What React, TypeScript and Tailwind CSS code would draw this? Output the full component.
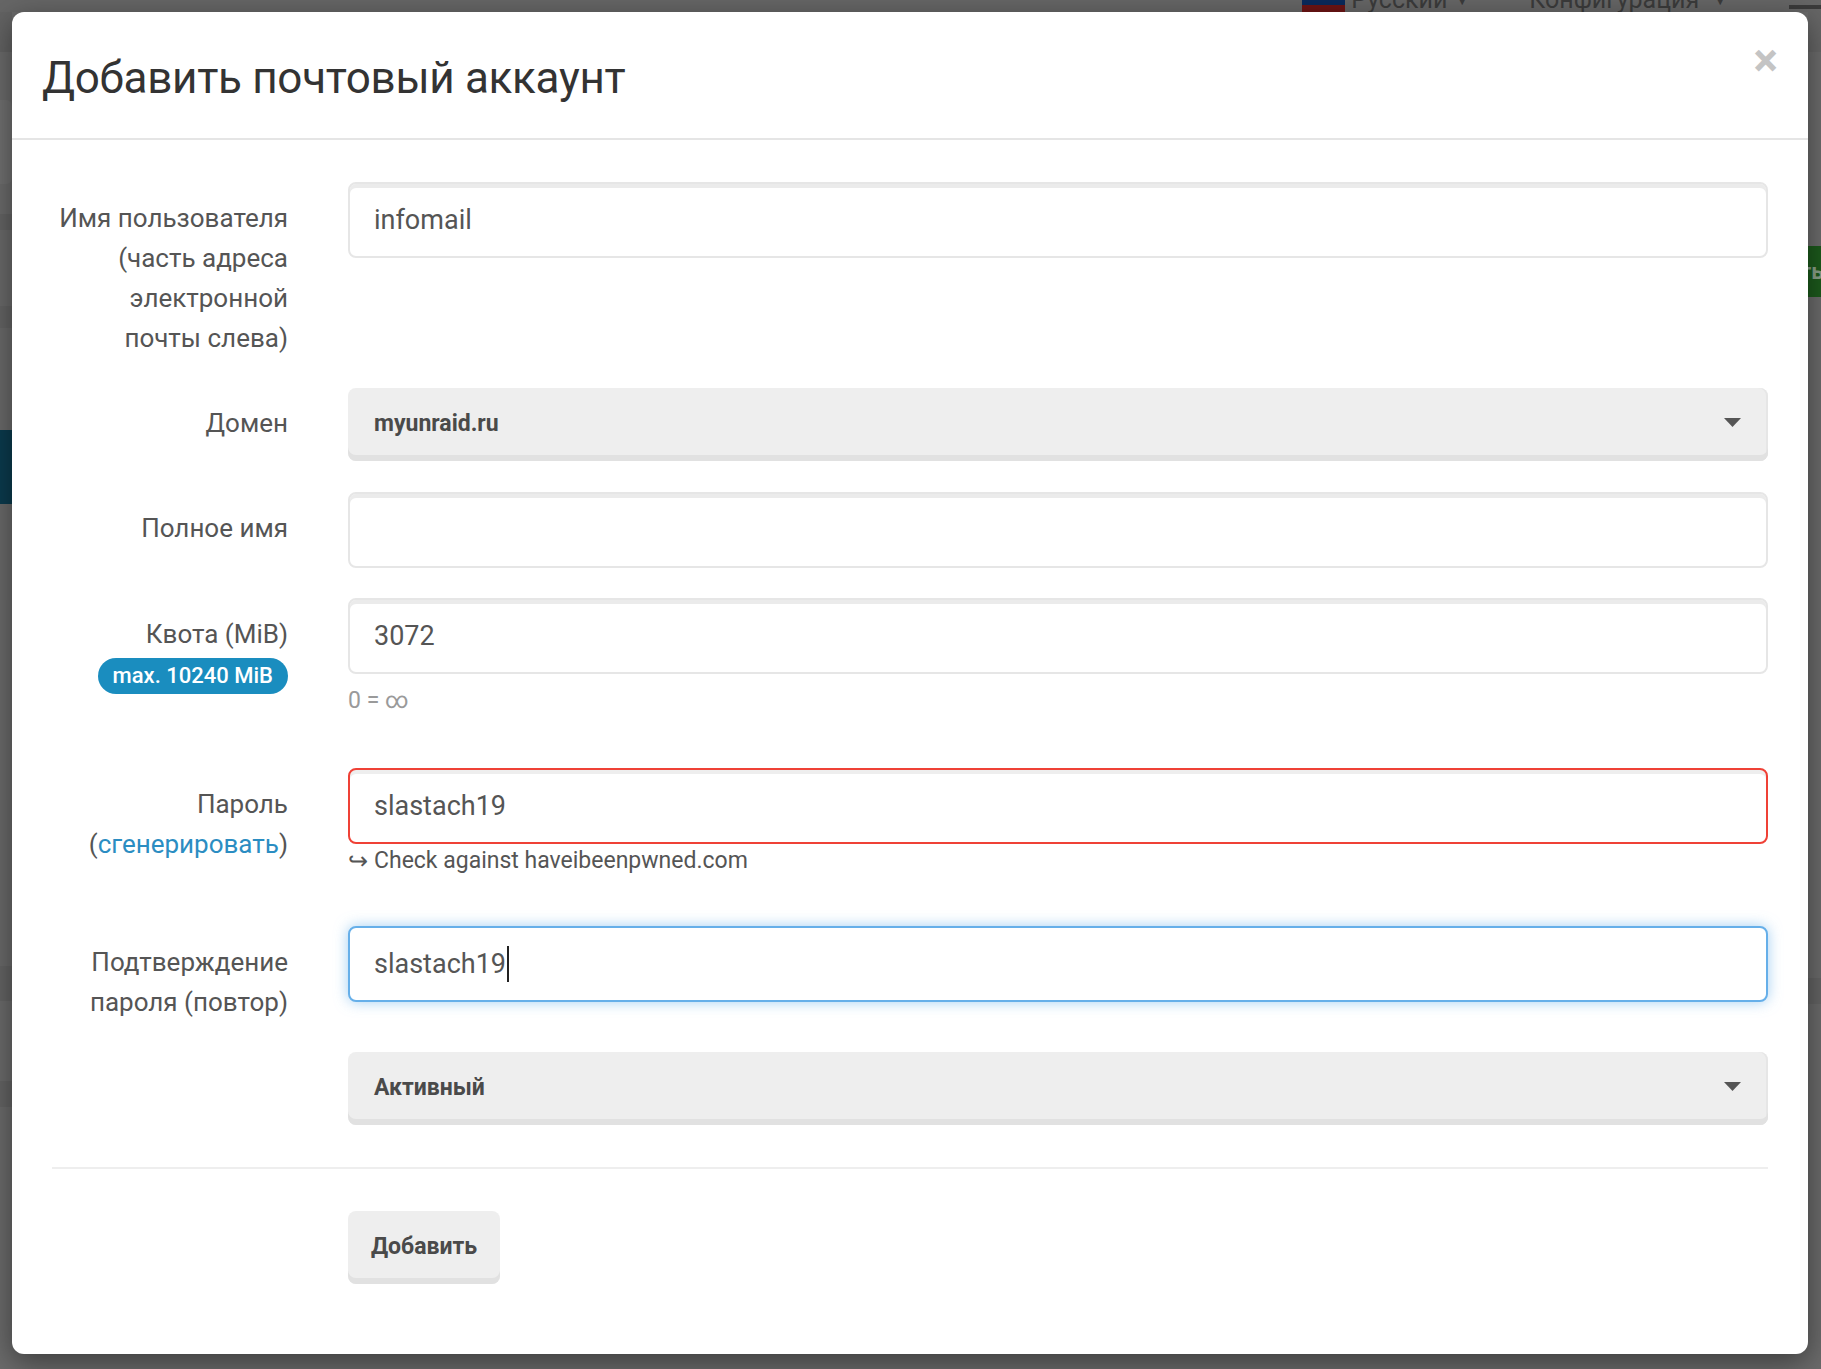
import React from "react"

const font = "font-['Roboto','Noto_Sans',sans-serif]"

function Caret() {
  return (
    <svg width="17" height="9" viewBox="0 0 17 9" className="shrink-0">
      <path d="M0 0 L17 0 L8.5 9 Z" fill="#555" />
    </svg>
  )
}

function TextBox({ value, tone = "normal", cursor = false }: { value?: string; tone?: "normal" | "error" | "focus"; cursor?: boolean }) {
  const toneClass =
    tone === "error"
      ? "border-[#ef4136] shadow-[inset_0_4px_0_#eeeeee]"
      : tone === "focus"
        ? "border-[#66afe9] shadow-[0_0_14px_rgba(102,175,233,0.6)]"
        : "border-[#e6e6e6] shadow-[inset_0_4px_0_#ebebeb]"
  return (
    <div className={`flex h-[76px] items-center rounded-[8px] border-2 bg-white pl-[24px] text-[27px] text-[#555] ${toneClass}`}>
      <span>{value}</span>
      {cursor && <span className="ml-[1px] inline-block h-[36px] w-[2px] bg-[#222]" />}
    </div>
  )
}

function SelectBox({ value }: { value: string }) {
  return (
    <div className="flex h-[73px] items-center justify-between rounded-[8px] bg-[#eeeeee] pl-[26px] pr-[27px] pb-[1px] text-[23px] font-bold text-[#4a4a4a] shadow-[inset_0_-6px_0_#e1e1e1,inset_-2px_0_0_#e6e6e6]">
      <span>{value}</span>
      <span className="-mt-[4px]">
        <Caret />
      </span>
    </div>
  )
}

function Row({ label, children, pt = "pt-[16px]", mb = "mb-[30px]" }: { label: React.ReactNode; children: React.ReactNode; pt?: string; mb?: string }) {
  return (
    <div className={`flex gap-[60px] ${mb}`}>
      <div className={`w-[236px] shrink-0 whitespace-nowrap text-right text-[26px] leading-[40px] text-[#555] ${pt}`}>{label}</div>
      <div className="flex-1">{children}</div>
    </div>
  )
}

export default function App() {
  return (
    <div className={`relative h-[1369px] w-[1821px] overflow-hidden bg-[#6b6b6b] ${font}`}>
      {/* dimmed page behind the modal */}
      <div className="flex h-full flex-col">
        <div className="h-[12px] overflow-hidden bg-[#666]">
          <div className="-mt-[20px] flex h-[40px] items-center justify-end text-[25px] leading-[40px] text-[#3b3b3b]">
            <div className="mr-[6px] flex h-[30px] w-[43px] flex-col">
              <div className="flex-1 bg-[#5e5e5e]" />
              <div className="flex-1 bg-[#0a2a5c]" />
              <div className="flex-1 bg-[#6d1414]" />
            </div>
            <span>Русский</span>
            <span className="ml-[8px] text-[14px]">▼</span>
            <span className="ml-[60px]">Конфигурация</span>
            <span className="ml-[14px] text-[14px]">▼</span>
            <div className="ml-[62px] flex w-[32px] flex-col gap-[5px] pt-[22px]">
              <div className="h-[4px] bg-[#3b3b3b]" />
              <div className="h-[4px] bg-[#3b3b3b]" />
            </div>
          </div>
        </div>
        <div className="flex flex-1 justify-between">
          <div className="flex w-[12px] flex-col">
            <div className="h-[40px] bg-[#636363]" />
            <div className="h-[48px] bg-[#6b6b6b]" />
            <div className="h-[84px] rounded-r-[6px] bg-[#707070]" />
            <div className="h-[30px] bg-[#6b6b6b]" />
            <div className="h-[16px] bg-[#646464]" />
            <div className="h-[76px] bg-[#6a6a6a]" />
            <div className="h-[22px] bg-[#646464]" />
            <div className="h-[102px] bg-[#6a6a6a]" />
            <div className="h-[74px] bg-[#0b3b4e]" />
            <div className="h-[96px] bg-[#6a6a6a]" />
            <div className="h-[200px] bg-[#6b6b6b]" />
            <div className="h-[166px] bg-[#6a6a6a]" />
            <div className="h-[35px] bg-[#646464]" />
            <div className="h-[80px] bg-[#6b6b6b]" />
            <div className="h-[26px] bg-[#646464]" />
            <div className="flex-1 bg-[#6b6b6b]" />
          </div>
          <div className="flex w-[13px] flex-col">
            <div className="h-[40px] bg-[#666]" />
            <div className="h-[194px] bg-[#6c6c6c]" />
            <div className="flex h-[51px] items-center bg-[#1c5a1c] text-[22px] font-bold text-[#8aa08a]">
              <span className="-ml-[8px]">ть</span>
            </div>
            <div className="h-[681px] bg-[#6b6b6b]" />
            <div className="h-[26px] bg-[#646464]" />
            <div className="flex-1 bg-[#6b6b6b]" />
          </div>
        </div>
      </div>

      {/* modal */}
      <div className="absolute left-[12px] top-[12px] flex h-[1342px] w-[1796px] flex-col rounded-[12px] bg-white shadow-[0_8px_30px_rgba(0,0,0,0.45)]">
        <div className="flex h-[128px] shrink-0 items-center justify-between border-b-2 border-[#e5e5e5] pl-[30px] pr-[30px]">
          <h4 className="pt-[5px] text-[44px] font-normal tracking-[-0.3px] text-[#333]">Добавить почтовый аккаунт</h4>
          <span className="-mt-[30px] text-[46px] font-bold leading-none text-[#c4c4c4]">×</span>
        </div>

        <div className="flex flex-col px-[40px] pt-[42px]">
          <Row label={<>Имя пользователя<br />(часть адреса<br />электронной<br />почты слева)</>}>
            <TextBox value="infomail" />
          </Row>

          <Row label="Домен" pt="pt-[15px]" mb="mb-[31px]">
            <SelectBox value="myunraid.ru" />
          </Row>

          <Row label="Полное имя">
            <TextBox />
          </Row>

          <Row
            label={
              <div className="flex flex-col items-end">
                <span>Квота (MiB)</span>
                <span className="mt-[4px] flex h-[36px] items-center rounded-full bg-[#1a8dbf] px-[15px] text-[22px] font-medium leading-none text-white">
                  max. 10240 MiB
                </span>
              </div>
            }
          >
            <TextBox value="3072" />
            <div className="mt-[10px] mb-[20px] text-[23px] leading-[34px] text-[#9a9a9a]">0 = ∞</div>
          </Row>

          <Row
            label={
              <>
                Пароль
                <br />(<span className="text-[#2b8dc2]">сгенерировать</span>)
              </>
            }
          >
            <TextBox value="slastach19" tone="error" />
            <div className="mt-[2px] mb-[20px] flex items-center text-[23px] leading-[30px] text-[#555]">
              <span className="w-[26px] text-[24px] leading-none text-[#555]">↪</span>
              <span>Check against haveibeenpwned.com</span>
            </div>
          </Row>

          <Row label={<>Подтверждение<br />пароля (повтор)</>}>
            <TextBox value="slastach19" tone="focus" cursor />
          </Row>

          <Row label="" pt="pt-0" mb="mb-0">
            <SelectBox value="Активный" />
          </Row>

          <div className="mt-[42px] h-[2px] bg-[#eeeeee]" />

          <div className="mt-[42px] flex gap-[60px]">
            <div className="w-[236px] shrink-0" />
            <button className="flex h-[73px] w-[152px] items-center justify-center rounded-[8px] bg-[#eeeeee] pb-[1px] text-[23px] font-bold text-[#4a4a4a] shadow-[inset_0_-6px_0_#e1e1e1]">
              Добавить
            </button>
          </div>
        </div>
      </div>
    </div>
  )
}
